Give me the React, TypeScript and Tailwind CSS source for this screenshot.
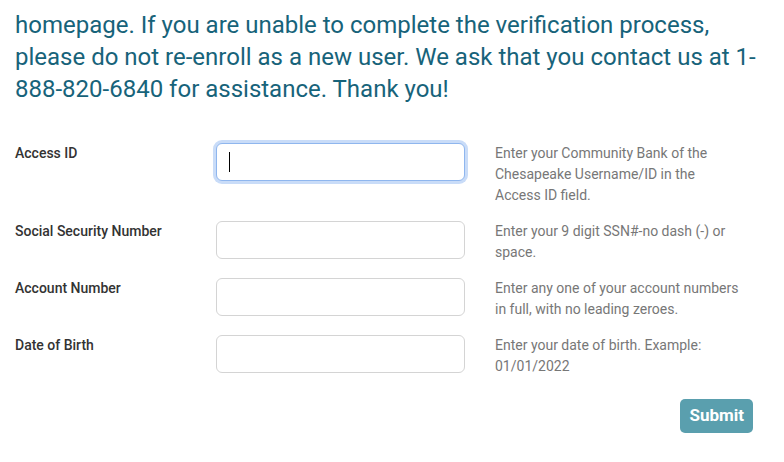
const rows = [
  {
    label: "Access ID",
    help: "Enter your Community Bank of the Chesapeake Username/ID in the Access ID field.",
    focused: true,
  },
  {
    label: "Social Security Number",
    help: "Enter your 9 digit SSN#-no dash (-) or space.",
  },
  {
    label: "Account Number",
    help: "Enter any one of your account numbers in full, with no leading zeroes.",
  },
  {
    label: "Date of Birth",
    help: "Enter your date of birth. Example: 01/01/2022",
  },
];

function Field({ label, help, focused }: { label: string; help: string; focused?: boolean }) {
  return (
    <div className="flex items-start mb-[15px]">
      <label className="w-[201px] shrink-0 text-[14px] leading-[21px] font-medium text-[#333]">
        {label}
      </label>
      <div className="relative w-[249px] shrink-0">
        <input
          type="text"
          className={
            focused
              ? "w-full h-[38px] rounded-[6px] border border-[#8fb6ee] bg-white outline-none shadow-[0_0_0_3px_#c9dcf8]"
              : "w-full h-[38px] rounded-[6px] border border-[#d4d4d4] bg-white outline-none"
          }
        />
        {focused && <span className="absolute left-[13px] top-[9px] w-px h-[20px] bg-black" />}
      </div>
      <p className="ml-[30px] w-[248px] text-[14px] leading-[21px] text-[#777]">{help}</p>
    </div>
  );
}

export default function App() {
  return (
    <div className="w-[784px] h-[462px] overflow-hidden bg-white font-['Roboto',sans-serif] pl-[15px] pr-[15px] pt-[9px]">
      <p className="text-[24px] leading-[32px] text-[#17637a]">
        homepage. If you are unable to complete the verification process, please do not re-enroll as a new user. We
        ask that you contact us at 1-888-820-6840 for assistance. Thank you!
      </p>
      <form className="mt-[38px] pr-[16px]">
        {rows.map((r) => (
          <Field key={r.label} {...r} />
        ))}
        <div className="flex justify-end mt-[22px]">
          <button
            type="button"
            className="h-[34px] px-[9px] rounded-[5px] bg-[#5a9fae] text-white text-[17px] font-bold"
          >
            Submit
          </button>
        </div>
      </form>
    </div>
  );
}
